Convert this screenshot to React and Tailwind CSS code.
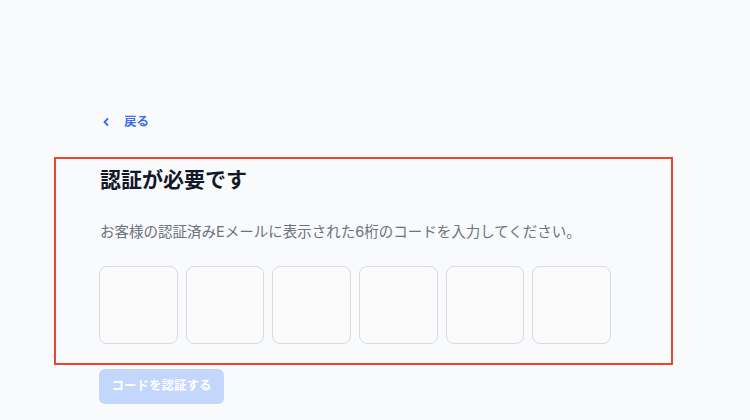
export default function App() {
  const font = { fontFamily: 'Inter, "Noto Sans CJK JP", sans-serif' };
  return (
    <div className="min-h-screen w-[750px] h-[420px] overflow-hidden bg-[#f9fafb] pt-[112px]" style={font}>
      <div className="ml-[101px] flex h-5 items-center gap-[13px] text-[12.5px] font-semibold text-[#3a6ee6]">
        <svg width="10" height="10" viewBox="0 0 10 10" fill="none" stroke="currentColor" strokeWidth="1.8" strokeLinecap="round" strokeLinejoin="round">
          <path d="M6.5 2 L3.5 5 L6.5 8" />
        </svg>
        <span>戻る</span>
      </div>
      <div className="mt-[25px] ml-[54px] h-[208px] w-[619px] border-2 border-[#e8472f] pl-[44px] pt-[7px]">
        <h1 className="text-[21px] font-bold leading-7 text-[#111827]">認証が必要です</h1>
        <p className="mt-[28px] text-[14.5px] leading-5 text-[#6b7280]">
          お客様の認証済みEメールに表示された6桁のコードを入力してください。
        </p>
        <div className="mt-[24px] -ml-px grid w-[512px] grid-cols-6 gap-2">
          {[0, 1, 2, 3, 4, 5].map((i) => (
            <div key={i} className="h-[78px] rounded-[8px] border border-[#d9dbe0] bg-[#fbfbfc]" />
          ))}
        </div>
      </div>
      <button className="mt-[4px] ml-[99px] flex h-[35px] w-[125px] items-center justify-center rounded-[6px] bg-[#c3d6fb] text-[12.5px] font-semibold text-white">
        コードを認証する
      </button>
    </div>
  );
}
